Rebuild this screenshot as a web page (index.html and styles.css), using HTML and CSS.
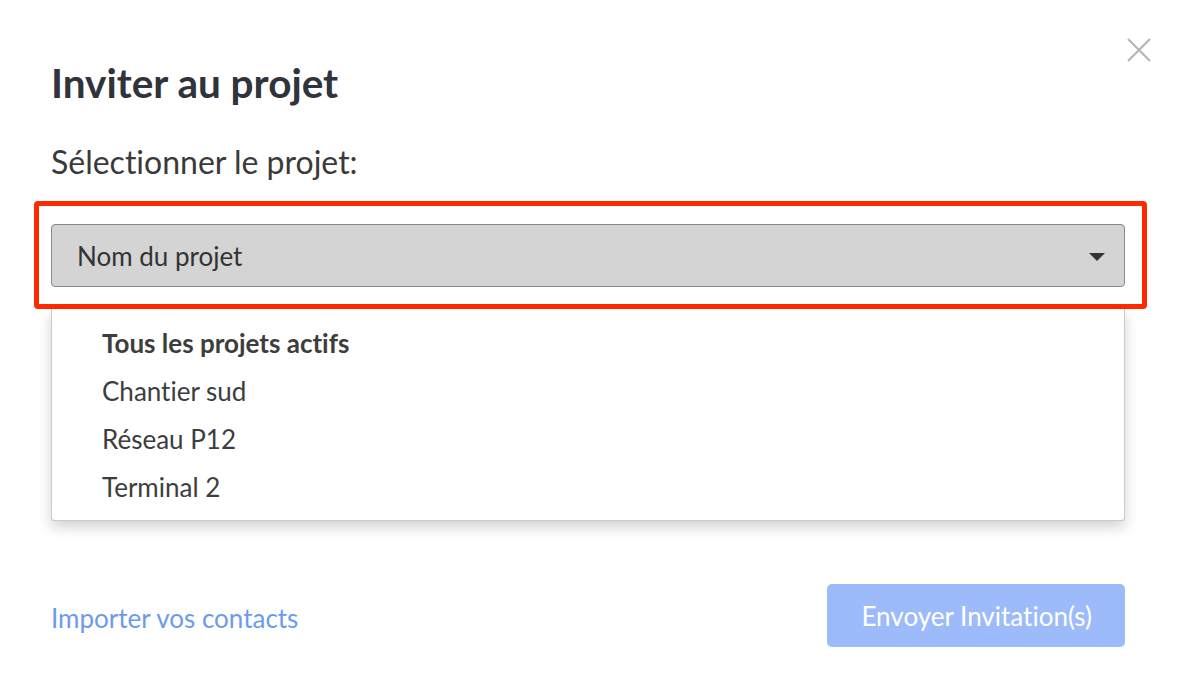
FILE: index.html
```html
<!DOCTYPE html>
<html lang="fr">
<head>
<meta charset="utf-8">
<title>Inviter au projet</title>
<link rel="stylesheet" href="styles.css">
</head>
<body>
<div class="modal">
  <button class="close" aria-label="Fermer">
    <svg width="24" height="24" viewBox="0 0 24 24"><path d="M1 1L23 23M23 1L1 23" stroke="#b3b3b3" stroke-width="2" fill="none"/></svg>
  </button>
  <h1 class="title">Inviter au projet</h1>
  <p class="subtitle">Sélectionner le projet:</p>
  <div class="highlight">
    <div class="select">
      <span class="select-value">Nom du projet</span>
      <span class="caret"></span>
    </div>
  </div>
  <div class="field-area">
    <div class="behind">
      <div class="textarea"></div>
    </div>
    <ul class="dropdown">
      <li class="item item-bold">Tous les projets actifs</li>
      <li class="item">Chantier sud</li>
      <li class="item">Réseau P12</li>
      <li class="item">Terminal 2</li>
    </ul>
  </div>
  <div class="footer">
    <a class="link" href="#">Importer vos contacts</a>
    <button class="send">Envoyer Invitation(s)</button>
  </div>
</div>
</body>
</html>
```
FILE: styles.css
```css
* { box-sizing: border-box; }
html, body { margin: 0; padding: 0; background: #fff; }
body {
  font-family: Lato, "Open Sans", sans-serif;
  font-variant-ligatures: none;
  color: #3a3a3a;
  width: 1178px;
  height: 698px;
  overflow: hidden;
}
.modal {
  position: relative;
  padding: 0 53px 0 51px;
}
.close {
  position: absolute;
  top: 38px;
  right: 27px;
  width: 24px;
  height: 24px;
  padding: 0;
  border: 0;
  background: none;
  display: block;
}
.close svg { display: block; }
.title {
  margin: 0;
  padding-top: 59px;
  font-size: 40.5px;
  line-height: 48px;
  font-weight: 700;
  color: #2f333b;
}
.subtitle {
  margin: 36px 0 0;
  font-size: 32px;
  line-height: 37px;
  color: #3a3a3a;
}
.highlight {
  margin: 21px -22px 0 -17px;
  border: 5px solid #ff2a00;
  border-radius: 4px;
  padding: 18px 17px 17px 12px;
}
.select {
  height: 63px;
  border: 1px solid #8a8a8a;
  border-radius: 4px;
  background: #d4d4d4;
  display: flex;
  align-items: center;
  justify-content: space-between;
  padding: 0 19px 0 25px;
}
.select-value {
  font-size: 26px;
  color: #333;
}
.caret {
  width: 0;
  height: 0;
  border-left: 8px solid transparent;
  border-right: 8px solid transparent;
  border-top: 8px solid #333;
  margin-top: 2px;
}
.field-area {
  position: relative;
}
.behind {
  padding-top: 148px;
}
.textarea {
  height: 64px;
  border: 1px solid #999;
  border-radius: 4px;
}
.dropdown {
  position: absolute;
  top: 0;
  left: 0;
  right: 0;
  margin: 0;
  list-style: none;
  background: #fff;
  border: 1px solid rgba(0, 0, 0, 0.2);
  border-top: 0;
  border-radius: 0 0 4px 4px;
  padding: 10px 0 9px 50px;
  box-shadow: 0 6px 14px rgba(0, 0, 0, 0.18);
}
.item {
  font-size: 26px;
  line-height: 48px;
  color: #3d3d3d;
}
.item-bold { font-weight: 700; }
.footer {
  margin-top: 63px;
  display: flex;
  align-items: center;
  justify-content: space-between;
}
.link {
  font-size: 26px;
  color: #6c9bee;
  text-decoration: none;
  margin-top: 4px;
}
.send {
  height: 63px;
  padding: 0 33px 0 34px;
  border: 0;
  border-radius: 5px;
  background: #9dbbfa;
  color: #fff;
  font-family: Lato, sans-serif;
  font-variant-ligatures: none;
  font-size: 26px;
}
```
